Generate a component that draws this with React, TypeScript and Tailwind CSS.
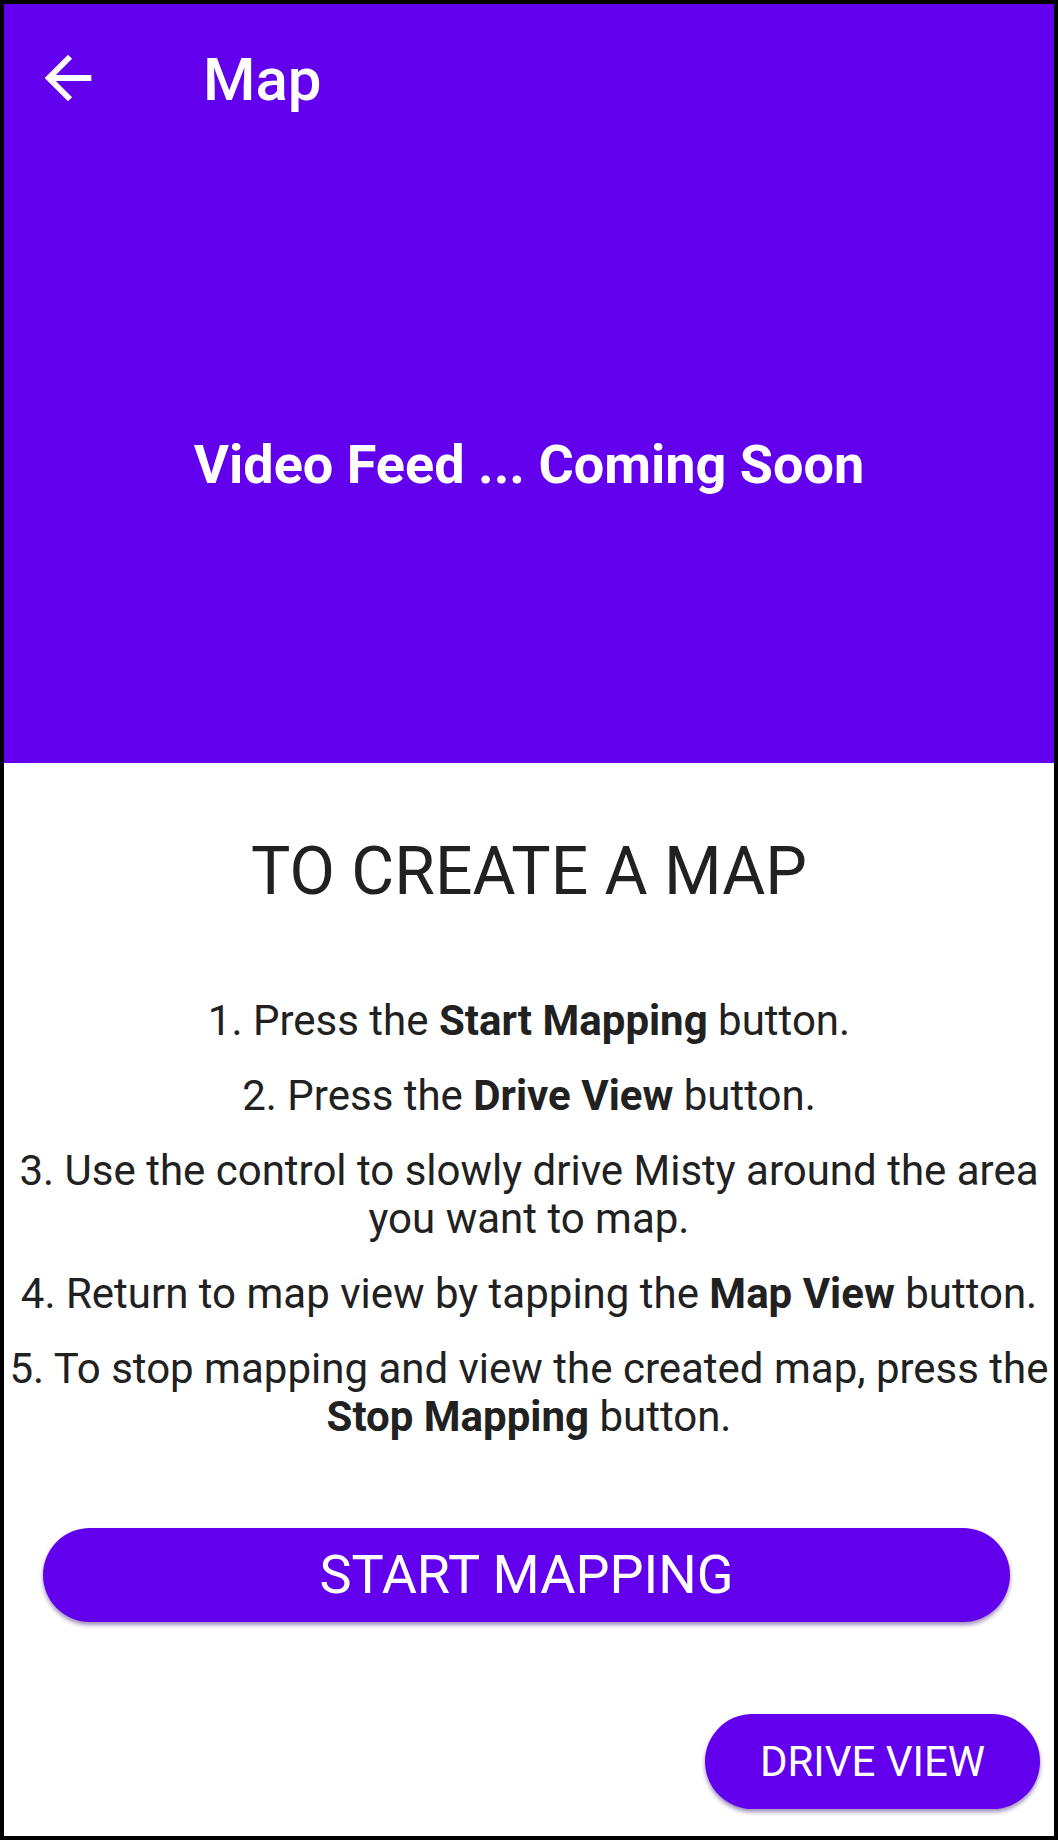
import React from "react";

const PURPLE = "bg-[#6200EE]";

function ArrowBack() {
  return (
    <svg width="70" height="70" viewBox="0 0 24 24" fill="white">
      <path d="M20 11H7.83l5.59-5.59L12 4l-8 8 8 8 1.41-1.41L7.83 13H20v-2z" />
    </svg>
  );
}

export default function App() {
  return (
    <div
      className="w-[1058px] h-[1840px] border-4 border-black bg-white flex flex-col box-border overflow-hidden"
      style={{ fontFamily: "Roboto, 'Noto Sans', sans-serif" }}
    >
      <div className={`${PURPLE} flex flex-col`}>
        <div className="h-[163px] flex items-start">
          <div className="ml-[29px] mt-[39px]">
            <ArrowBack />
          </div>
          <div className="ml-[100px] mt-[41px] text-[60px] leading-[70px] font-medium text-white">
            Map
          </div>
        </div>
        <div className="h-[596px] flex items-center justify-center">
          <span className="text-[54px] leading-[64px] font-bold text-white">
            Video Feed ... Coming Soon
          </span>
        </div>
      </div>

      <div className="flex flex-col text-[#212121]">
        <div className="mt-[70px] text-center text-[66px] leading-[77px]">TO CREATE A MAP</div>
        <div className="mt-[87px] flex flex-col gap-[27px] text-center text-[42px] leading-[48px]">
          <p>
            1. Press the <b className="font-bold">Start Mapping</b> button.
          </p>
          <p>
            2. Press the <b className="font-bold">Drive View</b> button.
          </p>
          <p>3. Use the control to slowly drive Misty around the area you want to map.</p>
          <p>
            4. Return to map view by tapping the <b className="font-bold">Map View</b> button.
          </p>
          <p>
            5. To stop mapping and view the created map, press the{" "}
            <b className="font-bold">Stop Mapping</b> button.
          </p>
        </div>

        <button
          className={`mt-[87px] ml-[39px] w-[967px] h-[94px] rounded-full ${PURPLE} text-white text-[54px] leading-[62px] flex items-center justify-center shadow-[0_3px_4px_rgba(40,0,100,0.45)]`}
        >
          START MAPPING
        </button>

        <div className="flex justify-end">
          <button
            className={`mt-[92px] mr-[14px] w-[335px] h-[95px] rounded-full ${PURPLE} text-white text-[42px] leading-[48px] flex items-center justify-center shadow-[0_3px_4px_rgba(40,0,100,0.45)]`}
          >
            DRIVE VIEW
          </button>
        </div>
      </div>
    </div>
  );
}
